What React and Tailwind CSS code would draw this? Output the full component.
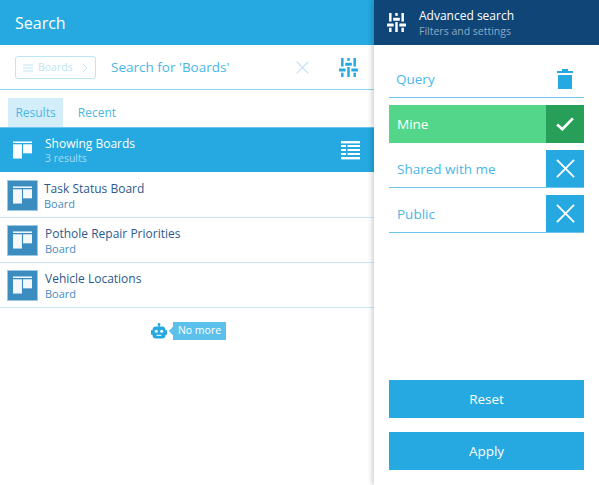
const BoardIcon = ({ className }) => (
  <svg viewBox="0 0 20 18" className={className} fill="currentColor">
    <rect x="0" y="0" width="20" height="1.6" />
    <rect x="0" y="3" width="9.4" height="15" />
    <rect x="10.6" y="3" width="9.4" height="9.5" />
  </svg>
);

const SlidersIcon = ({ className }) => (
  <svg viewBox="0 0 20 20" className={className} fill="currentColor">
    <rect x="2.2" y="0" width="2.6" height="9" />
    <rect x="0" y="11" width="7" height="3.2" rx="0.6" />
    <rect x="2.2" y="15.5" width="2.6" height="4.5" />
    <rect x="8.7" y="0" width="2.6" height="3" />
    <rect x="6.5" y="5" width="7" height="3.2" rx="0.6" />
    <rect x="8.7" y="9.5" width="2.6" height="10.5" />
    <rect x="15.2" y="0" width="2.6" height="9" />
    <rect x="13" y="11" width="7" height="3.2" rx="0.6" />
    <rect x="15.2" y="15.5" width="2.6" height="4.5" />
  </svg>
);

const CloseIcon = ({ className }) => (
  <svg viewBox="0 0 20 20" className={className} fill="none" stroke="currentColor" strokeWidth="2">
    <path d="M1 1 L19 19 M19 1 L1 19" />
  </svg>
);

const ListIcon = () => (
  <svg viewBox="0 0 19 19" className="w-[19px] h-[19px] text-white" fill="currentColor">
    <rect x="0" y="0" width="19" height="2.4" />
    <rect x="0" y="4" width="5" height="2" />
    <rect x="6.5" y="4" width="12.5" height="2" />
    <rect x="0" y="8" width="5" height="2" />
    <rect x="6.5" y="8" width="12.5" height="2" />
    <rect x="0" y="12" width="5" height="2" />
    <rect x="6.5" y="12" width="12.5" height="2" />
    <rect x="0" y="16" width="19" height="2.4" />
  </svg>
);

const BotIcon = () => (
  <svg viewBox="0 0 16 16" className="w-4 h-4 text-[#25a9e0]" fill="currentColor">
    <circle cx="8" cy="1.4" r="1.4" />
    <rect x="7.3" y="1.5" width="1.4" height="2.5" />
    <rect x="0" y="7" width="2" height="5" rx="1" />
    <rect x="14" y="7" width="2" height="5" rx="1" />
    <rect x="1.5" y="3.5" width="13" height="12" rx="3.5" />
    <circle cx="5.3" cy="8.3" r="1.5" fill="#fff" />
    <circle cx="10.7" cy="8.3" r="1.5" fill="#fff" />
    <rect x="5.5" y="11.8" width="5" height="1" fill="#fff" />
  </svg>
);

const results = [
  { name: 'Task Status Board', textMargin: 'ml-[6px]' },
  { name: 'Pothole Repair Priorities', textMargin: 'ml-[7px]' },
  { name: 'Vehicle Locations', textMargin: 'ml-[7px]' },
];

const filters = [
  { label: 'Shared with me' },
  { label: 'Public' },
];

const App = () => {
  return (
    <div className="flex w-[599px] h-[485px] overflow-hidden bg-white font-['Open_Sans',sans-serif]">
      {/* search column */}
      <div className="w-[374px] shrink-0 flex flex-col">
        <div className="h-[45px] bg-[#25a9e0] flex items-center pl-[15px] text-white text-[16px]">Search</div>

        <div className="h-[45px] flex items-center border-b border-[#8fd3f0] pl-[15px] pr-[16px]">
          <div className="w-[81px] h-[23px] flex items-center border border-[#bde5f6] rounded-[3px] pl-[7px] text-[10.5px] text-[#c0e4f4] mt-[1px]">
            <svg viewBox="0 0 10 8" className="w-[10px] h-[8px] mr-[5px]" fill="none" stroke="currentColor" strokeWidth="1">
              <path d="M0 1 H10 M0 4 H10 M0 7 H10" />
            </svg>
            <span>Boards</span>
            <svg viewBox="0 0 6 10" className="w-[6px] h-[10px] ml-[9px]" fill="none" stroke="currentColor" strokeWidth="1">
              <path d="M0.5 0.5 L5 5 L0.5 9.5" />
            </svg>
          </div>
          <span className="ml-[15px] pt-[1px] text-[13.5px] text-[#49b7e6]">Search for 'Boards'</span>
          <CloseIcon className="ml-auto w-[13px] h-[13px] text-[#bde5f6]" />
          <SlidersIcon className="ml-[30px] w-[19px] h-[19px] text-[#25a9e0]" />
        </div>

        <div className="flex h-[37px] items-end pl-[8px] text-[12px] text-[#49b7e6]">
          <div className="w-[55px] h-[29px] pt-[1px] bg-[#d3edf9] flex items-center justify-center">Results</div>
          <div className="w-[68px] h-[29px] pt-[1px] flex items-center justify-center">Recent</div>
        </div>

        <div className="h-[45px] bg-[#25a9e0] flex items-center pl-[13px] pr-[14px] border-t border-[#6cc5ec]">
          <BoardIcon className="w-[19px] h-[18px] text-white" />
          <div className="ml-[13px] flex flex-col">
            <span className="text-[12px] leading-[17px] text-white">Showing Boards</span>
            <span className="text-[10.5px] leading-[13px] text-[#a5dcf4]">3 results</span>
          </div>
          <div className="ml-auto"><ListIcon /></div>
        </div>

        <div className="mt-px">
          {results.map((item) => (
            <div key={item.name} className="h-[45px] flex items-center pl-[7px] border-b border-[#c9e8f6]">
              <div className="w-[31px] h-[31px] bg-[#3b8dc0] border border-[#9cc8e2] flex items-center justify-center">
                <BoardIcon className="w-[19px] h-[18px] text-[#f4f8fb]" />
              </div>
              <div className={`${item.textMargin} flex flex-col`}>
                <span className="text-[12px] leading-[17px] text-[#2c5a8c]">{item.name}</span>
                <span className="text-[11px] leading-[13px] text-[#4a8cc0]">Board</span>
              </div>
            </div>
          ))}
        </div>

        <div className="mt-[14px] flex items-center justify-center pl-[3px]">
          <BotIcon />
          <div className="relative ml-[6px] h-[18px] w-[53px] bg-[#5cc1ea] flex items-center justify-center text-[10.5px] text-white">
            <span className="absolute left-[-3px] top-[6px] w-[6px] h-[6px] rotate-45 bg-[#5cc1ea]"></span>
            No more
          </div>
        </div>
      </div>

      {/* advanced search column */}
      <div className="flex-1 flex flex-col shadow-[-2px_0_5px_rgba(0,0,0,0.18)] z-10 bg-white">
        <div className="h-[45px] bg-[#0f4577] flex items-center pl-[13px]">
          <SlidersIcon className="w-[19px] h-[19px] text-white" />
          <div className="ml-[13px] flex flex-col">
            <span className="text-[12px] leading-[16px] text-white">Advanced search</span>
            <span className="text-[10.5px] leading-[14px] text-[#8fa9c4]">Filters and settings</span>
          </div>
        </div>

        <div className="flex-1 flex flex-col pl-[15px] pr-[15px] pb-[15px]">
          <div className="mt-[15px] h-[38px] flex items-center justify-between border-b border-[#6cc5ec] pl-[7px] pr-[11px] text-[13.5px] text-[#49b7e6]">
            <span className="pt-[1px]">Query</span>
            <svg viewBox="0 0 16 20" className="w-[16px] h-[20px] text-[#25a9e0]" fill="currentColor">
              <rect x="0" y="2" width="16" height="2" />
              <rect x="5" y="0" width="6" height="2" />
              <rect x="1" y="6" width="14" height="14" />
            </svg>
          </div>

          <div className="mt-[7px] h-[38px] flex bg-[#54d68a] text-white text-[13.5px]">
            <span className="flex-1 flex items-center pl-[8px]">Mine</span>
            <div className="w-[38px] bg-[#279f58] flex items-center justify-center">
              <svg viewBox="0 0 20 16" className="w-[18px] h-[14px]" fill="none" stroke="currentColor" strokeWidth="3">
                <path d="M1 8.5 L7 14 L19 1.5" />
              </svg>
            </div>
          </div>

          {filters.map((filter) => (
            <div key={filter.label} className="mt-[7px] h-[38px] flex border-b border-[#6cc5ec] text-[13.5px] text-[#49b7e6]">
              <span className="flex-1 flex items-center pl-[8px] pt-[1px]">{filter.label}</span>
              <div className="w-[38px] bg-[#25a9e0] flex items-center justify-center">
                <CloseIcon className="w-[19px] h-[19px] text-white" />
              </div>
            </div>
          ))}

          <button className="mt-auto h-[38px] bg-[#25a9e0] text-white text-[13.5px]">Reset</button>
          <button className="mt-[14px] h-[38px] bg-[#25a9e0] text-white text-[13.5px]">Apply</button>
        </div>
      </div>
    </div>
  );
};

export default App;
